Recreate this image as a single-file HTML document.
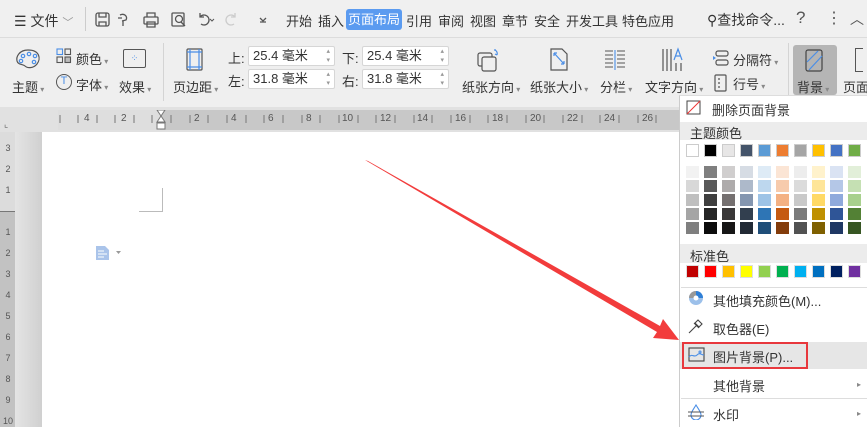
<!DOCTYPE html><html><head><meta charset="utf-8"><style>
*{margin:0;padding:0;box-sizing:border-box}
body{width:867px;height:427px;overflow:hidden;position:relative;background:#fff;font-family:"Liberation Sans","Noto Sans CJK SC",sans-serif;font-size:13px;color:#333}
.a{position:absolute;white-space:nowrap}
.tri{font-size:8px;color:#888}
.inp{position:absolute;background:#fff;border:1px solid #d6d6d6;border-radius:2px;height:20px;width:87px;padding-left:4px;line-height:18px;font-size:13px}
.inp:after{content:"▴\A▾";white-space:pre;position:absolute;right:4px;top:0;font-size:7px;line-height:9px;color:#999}
.sw{position:absolute;width:13px;height:13px}
</style></head><body>
<!-- top bar -->
<div class="a" style="left:0;top:0;width:867px;height:37px;background:#f0f0f0"></div>
<div class="a" style="left:0;top:37px;width:867px;height:70px;background:#efefef;border-top:1px solid #dcdcdc"></div>
<div class="a" style="left:14px;top:11px;font-size:14px">☰ 文件 <span style="color:#999;font-size:11px">﹀</span></div>
<div class="a" style="left:85px;top:7px;width:1px;height:24px;background:#ccc"></div>
<svg class="a" style="left:90px;top:8px" width="190" height="22" fill="none" stroke="#555" stroke-width="1.3">
<rect x="6" y="5" width="13" height="13" rx="2"/><path d="M9 5v4h7V5M9 18v-4h7v4"/>
<path d="M30 7c4-2 8 1 6 5l-4 1M33 13v5M28 10h4"/>
<rect x="54" y="9" width="14" height="7" rx="1"/><path d="M57 9V5h8v4M57 14h8v5h-8z"/>
<rect x="82" y="5" width="12" height="13" rx="1"/><circle cx="89" cy="11" r="3.5"/><path d="M91 14l4 4"/>
<path d="M110 9a5 5 0 1 1 1 7M110 5v4h4"/><path d="M120 11l2 2 2-2" stroke-width="1"/>
<path d="M145 9a5 5 0 1 0-1 7M145 5v4h-4" stroke="#ccc"/>
<path d="M170 10l3 3 3-3M170 14h6"/></svg>
<div class="a" style="left:286px;top:11px">开始</div>
<div class="a" style="left:318px;top:11px">插入</div>
<div class="a" style="left:346px;top:9px;width:56px;height:21px;background:#5b9bf0;border-radius:3px;color:#fff;line-height:21px;text-align:center">页面布局</div>
<div class="a" style="left:406px;top:11px">引用</div>
<div class="a" style="left:438px;top:11px">审阅</div>
<div class="a" style="left:470px;top:11px">视图</div>
<div class="a" style="left:502px;top:11px">章节</div>
<div class="a" style="left:534px;top:11px">安全</div>
<div class="a" style="left:566px;top:11px">开发工具</div>
<div class="a" style="left:622px;top:11px">特色应用</div>
<div class="a" style="left:707px;top:10px;font-size:14px">⚲查找命令...</div>
<div class="a" style="left:796px;top:8px;font-size:17px;color:#555">?</div>
<div class="a" style="left:826px;top:8px;font-size:16px;color:#555">⋮</div>
<div class="a" style="left:850px;top:9px;font-size:14px;color:#555">︿</div>
<!-- toolbar -->
<svg class="a" style="left:14px;top:47px" width="28" height="24" fill="none" stroke="#555" stroke-width="1.2"><path d="M14 3C5 3 2 10 3 14s6 3 8 5 8 3 12-2 3-14-9-14z"/><circle cx="9" cy="9" r="1.7" stroke="#4a8ee6"/><circle cx="15" cy="7" r="1.7" stroke="#4a8ee6"/><circle cx="21" cy="9" r="1.7" stroke="#4a8ee6"/><circle cx="20" cy="15" r="1.7" stroke="#4a8ee6"/><circle cx="7" cy="14" r="1.7" stroke="#4a8ee6"/></svg>
<div class="a" style="left:12px;top:77px">主题<span class="tri"> ▾</span></div>
<svg class="a" style="left:56px;top:48px" width="16" height="16" fill="none" stroke="#555" stroke-width="1.1"><rect x="1" y="1" width="5.5" height="5.5" stroke="#4a8ee6"/><rect x="9" y="1" width="5.5" height="5.5"/><rect x="1" y="9" width="5.5" height="5.5"/><rect x="9" y="9" width="5.5" height="5.5" fill="#bbb"/></svg>
<div class="a" style="left:76px;top:49px">颜色<span class="tri"> ▾</span></div>
<div class="a" style="left:56px;top:74px;width:16px;height:16px;border:1.2px solid #555;border-radius:50%;font-size:11px;line-height:13px;text-align:center;color:#4a8ee6">T</div>
<div class="a" style="left:76px;top:75px">字体<span class="tri"> ▾</span></div>
<div class="a" style="left:123px;top:49px;width:23px;height:19px;border:1px solid #555;border-radius:2px;font-size:9px;color:#4a8ee6;text-align:center;line-height:16px">⁘</div>
<div class="a" style="left:119px;top:77px">效果<span class="tri"> ▾</span></div>
<div class="a" style="left:163px;top:43px;width:1px;height:58px;background:#d4d4d4"></div>
<svg class="a" style="left:185px;top:47px" width="20" height="26" fill="none" stroke="#555" stroke-width="1.2"><rect x="2" y="2" width="15" height="21" rx="1"/><path d="M5 2v21M14 2v21M2 5h15M2 20h15" stroke="#4a8ee6"/></svg>
<div class="a" style="left:173px;top:77px">页边距<span class="tri"> ▾</span></div>
<div class="a" style="left:228px;top:48px">上:</div><div class="inp" style="left:248px;top:46px">25.4 毫米</div>
<div class="a" style="left:228px;top:71px">左:</div><div class="inp" style="left:248px;top:69px">31.8 毫米</div>
<div class="a" style="left:342px;top:48px">下:</div><div class="inp" style="left:362px;top:46px">25.4 毫米</div>
<div class="a" style="left:342px;top:71px">右:</div><div class="inp" style="left:362px;top:69px">31.8 毫米</div>
<svg class="a" style="left:476px;top:47px" width="30" height="26" fill="none" stroke="#555" stroke-width="1.2"><rect x="2" y="6" width="14" height="13" rx="2"/><rect x="6" y="10" width="14" height="14" rx="2" fill="#efefef"/><path d="M19 3a4 4 0 0 1 2 5M18 3h2M21 8l-2-1" stroke="#4a8ee6"/></svg>
<div class="a" style="left:462px;top:77px">纸张方向<span class="tri"> ▾</span></div>
<svg class="a" style="left:548px;top:47px" width="22" height="26" fill="none" stroke="#555" stroke-width="1.2"><path d="M3 2h11l5 5v16H3z"/><path d="M6 6l10 11M6 6h3M6 6v3M16 17h-3M16 17v-3" stroke="#4a8ee6"/></svg>
<div class="a" style="left:530px;top:77px">纸张大小<span class="tri"> ▾</span></div>
<svg class="a" style="left:603px;top:49px" width="24" height="22" stroke="#555" stroke-width="1.1"><path d="M2 2h8M2 6h8M2 10h8M2 14h8M2 18h8M14 2h8M14 6h8M14 10h8M14 14h8M14 18h8"/><path d="M12 1v20" stroke="#4a8ee6"/></svg>
<div class="a" style="left:600px;top:77px">分栏<span class="tri"> ▾</span></div>
<svg class="a" style="left:660px;top:47px" width="24" height="26" fill="none" stroke="#555" stroke-width="1.2"><path d="M3 2v22M7 2v22M11 2v22M16 16v8M21 16v8"/><path d="M14 13l4-11 4 11M15 9h6" stroke="#4a8ee6"/></svg>
<div class="a" style="left:645px;top:77px">文字方向<span class="tri"> ▾</span></div>
<svg class="a" style="left:712px;top:50px" width="18" height="16" fill="none" stroke="#555" stroke-width="1.2"><rect x="4" y="1" width="12" height="5" rx="2"/><rect x="4" y="10" width="12" height="5" rx="2"/><path d="M1 6l3 2-3 2z" fill="#4a8ee6" stroke="none"/></svg>
<div class="a" style="left:733px;top:50px">分隔符<span class="tri"> ▾</span></div>
<svg class="a" style="left:714px;top:74px" width="14" height="18" fill="none" stroke="#555" stroke-width="1.2"><rect x="1" y="1" width="11" height="16" rx="1"/><path d="M4 5h2M4 9h2M4 13h2"/></svg>
<div class="a" style="left:733px;top:74px">行号<span class="tri"> ▾</span></div>
<div class="a" style="left:788px;top:43px;width:1px;height:58px;background:#d4d4d4"></div>
<div class="a" style="left:793px;top:45px;width:44px;height:50px;background:#b5b5b5;border-radius:3px"></div>
<svg class="a" style="left:804px;top:48px" width="22" height="26" fill="none" stroke="#444" stroke-width="1.2"><rect x="2" y="2" width="16" height="21" rx="2"/><path d="M3 14L14 3M5 22L18 8" stroke="#4a8ee6"/></svg>
<div class="a" style="left:797px;top:77px">背景<span class="tri"> ▾</span></div>
<div class="a" style="left:843px;top:77px">页面</div>
<div class="a" style="left:855px;top:48px;width:8px;height:24px;border:1.2px solid #555;border-right:none"></div>
<!-- ruler -->
<div class="a" style="left:0;top:107px;width:867px;height:25px;background:#e1e1e1"></div>
<div class="a" style="left:160px;top:110px;width:707px;height:20px;background:#c8c8c8"></div>
<div class="a" style="left:58px;top:110px;width:102px;height:20px;background:#dedede"></div>
<div class="a" style="left:4px;top:119px;font-size:9px;color:#666">⌞</div>
<div class="a" style="left:0;top:113px;width:680px;font-size:10px;color:#555;letter-spacing:0">
<span class="a" style="left:84px">4</span><span class="a" style="left:121px">2</span><span class="a" style="left:194px">2</span><span class="a" style="left:231px">4</span><span class="a" style="left:268px">6</span><span class="a" style="left:306px">8</span><span class="a" style="left:342px">10</span><span class="a" style="left:380px">12</span><span class="a" style="left:417px">14</span><span class="a" style="left:455px">16</span><span class="a" style="left:492px">18</span><span class="a" style="left:530px">20</span><span class="a" style="left:567px">22</span><span class="a" style="left:604px">24</span><span class="a" style="left:642px">26</span></div>
<svg class="a" style="left:0;top:110px" width="680" height="20" stroke="#777" stroke-width="1"><path d="M60 5v8M78 5v8M97 5v8M115 5v8M134 5v8M152 5v8M171 5v8M190 5v8M208 5v8M227 5v8M246 5v8M264 5v8M283 5v8M302 5v8M320 5v8M339 5v8M358 5v8M376 5v8M395 5v8M414 5v8M432 5v8M451 5v8M470 5v8M488 5v8M507 5v8M526 5v8M544 5v8M563 5v8M582 5v8M600 5v8M619 5v8M638 5v8M656 5v8"/><path d="M157 0h8l-4 6zM157 12l4-6 4 6z" fill="#fff"/><rect x="157" y="13" width="8" height="6" fill="#fff"/></svg>
<!-- doc -->
<div class="a" style="left:0;top:132px;width:15px;height:295px;background:#dcdcdc"></div>
<div class="a" style="left:0;top:211px;width:15px;height:216px;background:#c2c2c2;border-top:1px solid #777"></div>
<div class="a" style="left:15px;top:132px;width:27px;height:295px;background:linear-gradient(90deg,#e4e4e4,#d0d0d0)"></div>
<div class="a" style="left:3px;top:138px;font-size:9px;color:#555;line-height:21px;width:10px;text-align:center">3<br>2<br>1<br><br>1<br>2<br>3<br>4<br>5<br>6<br>7<br>8<br>9<br>10</div>
<div class="a" style="left:139px;top:188px;width:24px;height:24px;border-right:1px solid #bbb;border-bottom:1px solid #bbb"></div>
<svg class="a" style="left:96px;top:246px" width="26" height="14"><path d="M0 0h9l4 4v10H0z" fill="#aac4ea"/><path d="M2 5h6M2 8h9M2 11h6" stroke="#fff"/><path d="M116 0" /><path d="M20 5h5l-2.5 3z" fill="#999"/></svg>
<!-- arrow -->
<svg class="a" style="left:0;top:0" width="867" height="427"><polygon points="365,160 368,161 660,326 663,319 679,340 653,338 657,332" fill="#f23c3c"/></svg>
<!-- menu -->
<div class="a" style="left:679px;top:95px;width:188px;height:332px;background:#fff;border-left:1px solid #ccc;border-top:1px solid #ddd"></div>
<svg class="a" style="left:686px;top:100px" width="16" height="16" fill="none"><rect x="1" y="1" width="13" height="13" stroke="#444"/><path d="M1 14L14 1" stroke="#e33"/></svg>
<div class="a" style="left:712px;top:100px">删除页面背景</div>
<div class="a" style="left:680px;top:122px;width:187px;height:18px;background:#ececec"></div>
<div class="a" style="left:690px;top:123px">主题颜色</div>
<div id="th"></div>
<div class="a" style="left:680px;top:244px;width:187px;height:19px;background:#ececec"></div>
<div class="a" style="left:690px;top:246px">标准色</div>
<div class="a" style="left:681px;top:287px;width:186px;height:1px;background:#ddd"></div>
<svg class="a" style="left:688px;top:290px" width="16" height="16"><circle cx="8" cy="8" r="7" fill="#9cc0ea"/><path d="M8 8V1a7 7 0 0 1 7 7z" fill="#2f7fd6"/><path d="M8 8H1a7 7 0 0 1 7-7z" fill="#999"/><circle cx="8" cy="8" r="2.5" fill="#fff"/></svg>
<div class="a" style="left:713px;top:291px">其他填充颜色(M)...</div>
<svg class="a" style="left:688px;top:318px" width="16" height="16" fill="none" stroke="#444" stroke-width="1.1"><path d="M1 15l8-8M6 5l5 5M10 2l4 4-3 3-4-4z"/></svg>
<div class="a" style="left:713px;top:319px">取色器(E)</div>
<div class="a" style="left:680px;top:342px;width:187px;height:27px;background:#e6e6e6"></div>
<div class="a" style="left:682px;top:342px;width:126px;height:27px;border:2px solid #e8383d"></div>
<svg class="a" style="left:688px;top:347px" width="17" height="15" fill="none" stroke="#444" stroke-width="1.1"><rect x="1" y="1" width="15" height="13"/><path d="M1 10c3-4 5 1 8-2s4 0 7 0" stroke="#4a8ee6"/><circle cx="12" cy="5" r="1" stroke="#4a8ee6"/></svg>
<div class="a" style="left:713px;top:347px">图片背景(P)...</div>
<div class="a" style="left:713px;top:376px">其他背景</div><div class="a tri" style="left:857px;top:380px">▸</div>
<div class="a" style="left:681px;top:398px;width:186px;height:1px;background:#ddd"></div>
<svg class="a" style="left:688px;top:404px" width="16" height="16" fill="none" stroke="#4a8ee6" stroke-width="1.1"><path d="M8 1C5 6 3 8 3 11a5 5 0 0 0 10 0c0-3-2-5-5-10z"/><path d="M0 8h16M0 12h16" stroke="#555"/></svg>
<div class="a" style="left:713px;top:405px">水印</div><div class="a tri" style="left:857px;top:409px">▸</div>
<script>
var th=["#ffffff","#000000","#e7e6e6","#44546a","#5b9bd5","#ed7d31","#a5a5a5","#ffc000","#4472c4","#70ad47"];
var g=[["#f2f2f2","#d8d8d8","#bfbfbf","#a5a5a5","#7f7f7f"],["#7f7f7f","#595959","#3f3f3f","#262626","#0c0c0c"],["#d0cece","#aeabab","#757070","#3a3838","#171616"],["#d6dce4","#adb9ca","#8496b0","#323f4f","#222a35"],["#deebf6","#bdd7ee","#9dc3e6","#2e75b5","#1f4e79"],["#fbe5d5","#f7cbac","#f4b183","#c55a11","#833c0b"],["#ededed","#dbdbdb","#c9c9c9","#7b7b7b","#525252"],["#fff2cc","#fee599","#ffd965","#bf9000","#7f6000"],["#dae3f3","#b4c7e7","#8faadc","#2f5597","#1f3864"],["#e2efd9","#c5e0b3","#a8d08d","#538135","#375623"]];
var st=["#c00000","#ff0000","#ffc000","#ffff00","#92d050","#00b050","#00b0f0","#0070c0","#002060","#7030a0"];
var h="";
for(var i=0;i<10;i++){var x=686+18*i;
h+='<div class="sw" style="left:'+x+'px;top:144px;background:'+th[i]+';border:1px solid #ccc"></div>';
for(var j=0;j<5;j++)h+='<div class="sw" style="left:'+x+'px;top:'+(166+14*j)+'px;height:12px;background:'+g[i][j]+'"></div>';
h+='<div class="sw" style="left:'+x+'px;top:265px;background:'+st[i]+';border:1px solid #ddd"></div>';}
document.getElementById("th").innerHTML=h;
</script>
</body></html>
